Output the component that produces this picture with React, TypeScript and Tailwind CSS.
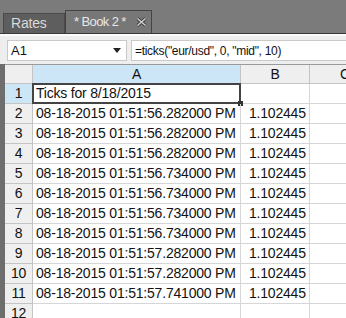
const rows = [
  ["Ticks for 8/18/2015", ""],
  ["08-18-2015 01:51:56.282000 PM", "1.102445"],
  ["08-18-2015 01:51:56.282000 PM", "1.102445"],
  ["08-18-2015 01:51:56.282000 PM", "1.102445"],
  ["08-18-2015 01:51:56.734000 PM", "1.102445"],
  ["08-18-2015 01:51:56.734000 PM", "1.102445"],
  ["08-18-2015 01:51:56.734000 PM", "1.102445"],
  ["08-18-2015 01:51:56.734000 PM", "1.102445"],
  ["08-18-2015 01:51:57.282000 PM", "1.102445"],
  ["08-18-2015 01:51:57.282000 PM", "1.102445"],
  ["08-18-2015 01:51:57.741000 PM", "1.102445"],
  ["", ""],
];

const font = { fontFamily: '"Liberation Sans", Arial, sans-serif' };

export default function App() {
  return (
    <div className="w-[346px] h-[318px] overflow-hidden bg-[#7b7b7b]" style={font}>
      {/* Tabs */}
      <div className="h-[34px] flex items-end pl-[3px] border-b border-[#3a3a3a]">
        <div className="w-[62px] shrink-0 h-[20px] bg-[#5e5e5e] border border-b-0 border-[#4a4a4a] text-[#dadada] text-[14px] pl-[7px] leading-[19px] tracking-[-0.2px]">
          Rates
        </div>
        <div className="w-[87px] shrink-0 h-[23px] bg-[#777777] border border-b-0 border-[#444] flex items-center pl-[8px] text-[#e8e8e8] text-[13px] whitespace-nowrap">
          <span className="tracking-[-0.6px]">* Book 2 *</span>
          <svg className="ml-[10px] shrink-0" width="11" height="10" viewBox="0 0 11 10">
            <path d="M1.5 1.5 L9.5 8.5 M9.5 1.5 L1.5 8.5" stroke="#3c3c3c" strokeWidth="3.2" />
            <path d="M1.5 1.5 L9.5 8.5 M9.5 1.5 L1.5 8.5" stroke="#cfcfcf" strokeWidth="1.6" />
          </svg>
        </div>
      </div>

      {/* Formula bar */}
      <div className="h-[30px] bg-[#eeeeee] border-t-[2px] border-[#fbfbfb] flex items-start pt-[4px] pl-[7px] gap-[4px]">
        <div className="w-[120px] shrink-0 h-[21px] bg-white border border-[#c9c9c9] flex items-center px-[3px] text-[13px] text-[#111]">
          <span className="flex-1">A1</span>
          <svg width="8" height="5" viewBox="0 0 8 5" className="mr-[2px]">
            <path d="M0 0 H8 L4 5 Z" fill="#222" />
          </svg>
        </div>
        <div className="flex-1 h-[21px] bg-white border border-r-0 border-[#c9c9c9] flex items-center pl-[3px] text-[12px] text-[#111] tracking-[-0.3px] whitespace-nowrap">
          =ticks("eur/usd", 0, "mid", 10)
        </div>
      </div>

      {/* Grid */}
      <div className="flex">
        <div className="w-[5px] shrink-0 bg-[#6e6e6e] self-stretch" />
        <div className="flex-1 min-w-0 bg-white text-[14px] text-[#111] tracking-[-0.2px]">
          <div className="flex h-[20px] border-t border-[#9a9a9a]">
            <div className="w-[28px] shrink-0 bg-[#efefef] border-r border-b border-[#c4c4c4]" />
            <div className="w-[208px] shrink-0 bg-[#cde6f7] border-r border-b border-[#c4c4c4] flex items-center justify-center">A</div>
            <div className="w-[69px] shrink-0 bg-[#efefef] border-r border-b border-[#c4c4c4] flex items-center justify-center">B</div>
            <div className="flex-1 bg-[#efefef] border-b border-[#c4c4c4] pl-[30px] flex items-center">C</div>
          </div>
          {rows.map((r, i) => (
            <div key={i} className="flex h-[20px]">
              <div
                className={`w-[28px] shrink-0 border-r border-b border-[#c4c4c4] flex items-center justify-center ${
                  i === 0 ? "bg-[#cde6f7]" : "bg-[#efefef]"
                }`}
              >
                {i + 1}
              </div>
              <div className="w-[208px] shrink-0 border-r border-b border-[#d6d6d6] flex items-center pl-[3px] whitespace-nowrap relative">
                {r[0]}
                {i === 0 && (
                  <div className="absolute -top-[1px] -left-[1px] -right-[1px] -bottom-[1px] border-2 border-[#444]">
                    <div className="absolute -right-[4px] -bottom-[4px] w-[5px] h-[5px] bg-[#333]" />
                  </div>
                )}
              </div>
              <div className="w-[69px] shrink-0 border-r border-b border-[#d6d6d6] flex items-center pl-[8px]">{r[1]}</div>
              <div className="flex-1 border-b border-[#d6d6d6]" />
            </div>
          ))}
        </div>
      </div>
    </div>
  );
}
